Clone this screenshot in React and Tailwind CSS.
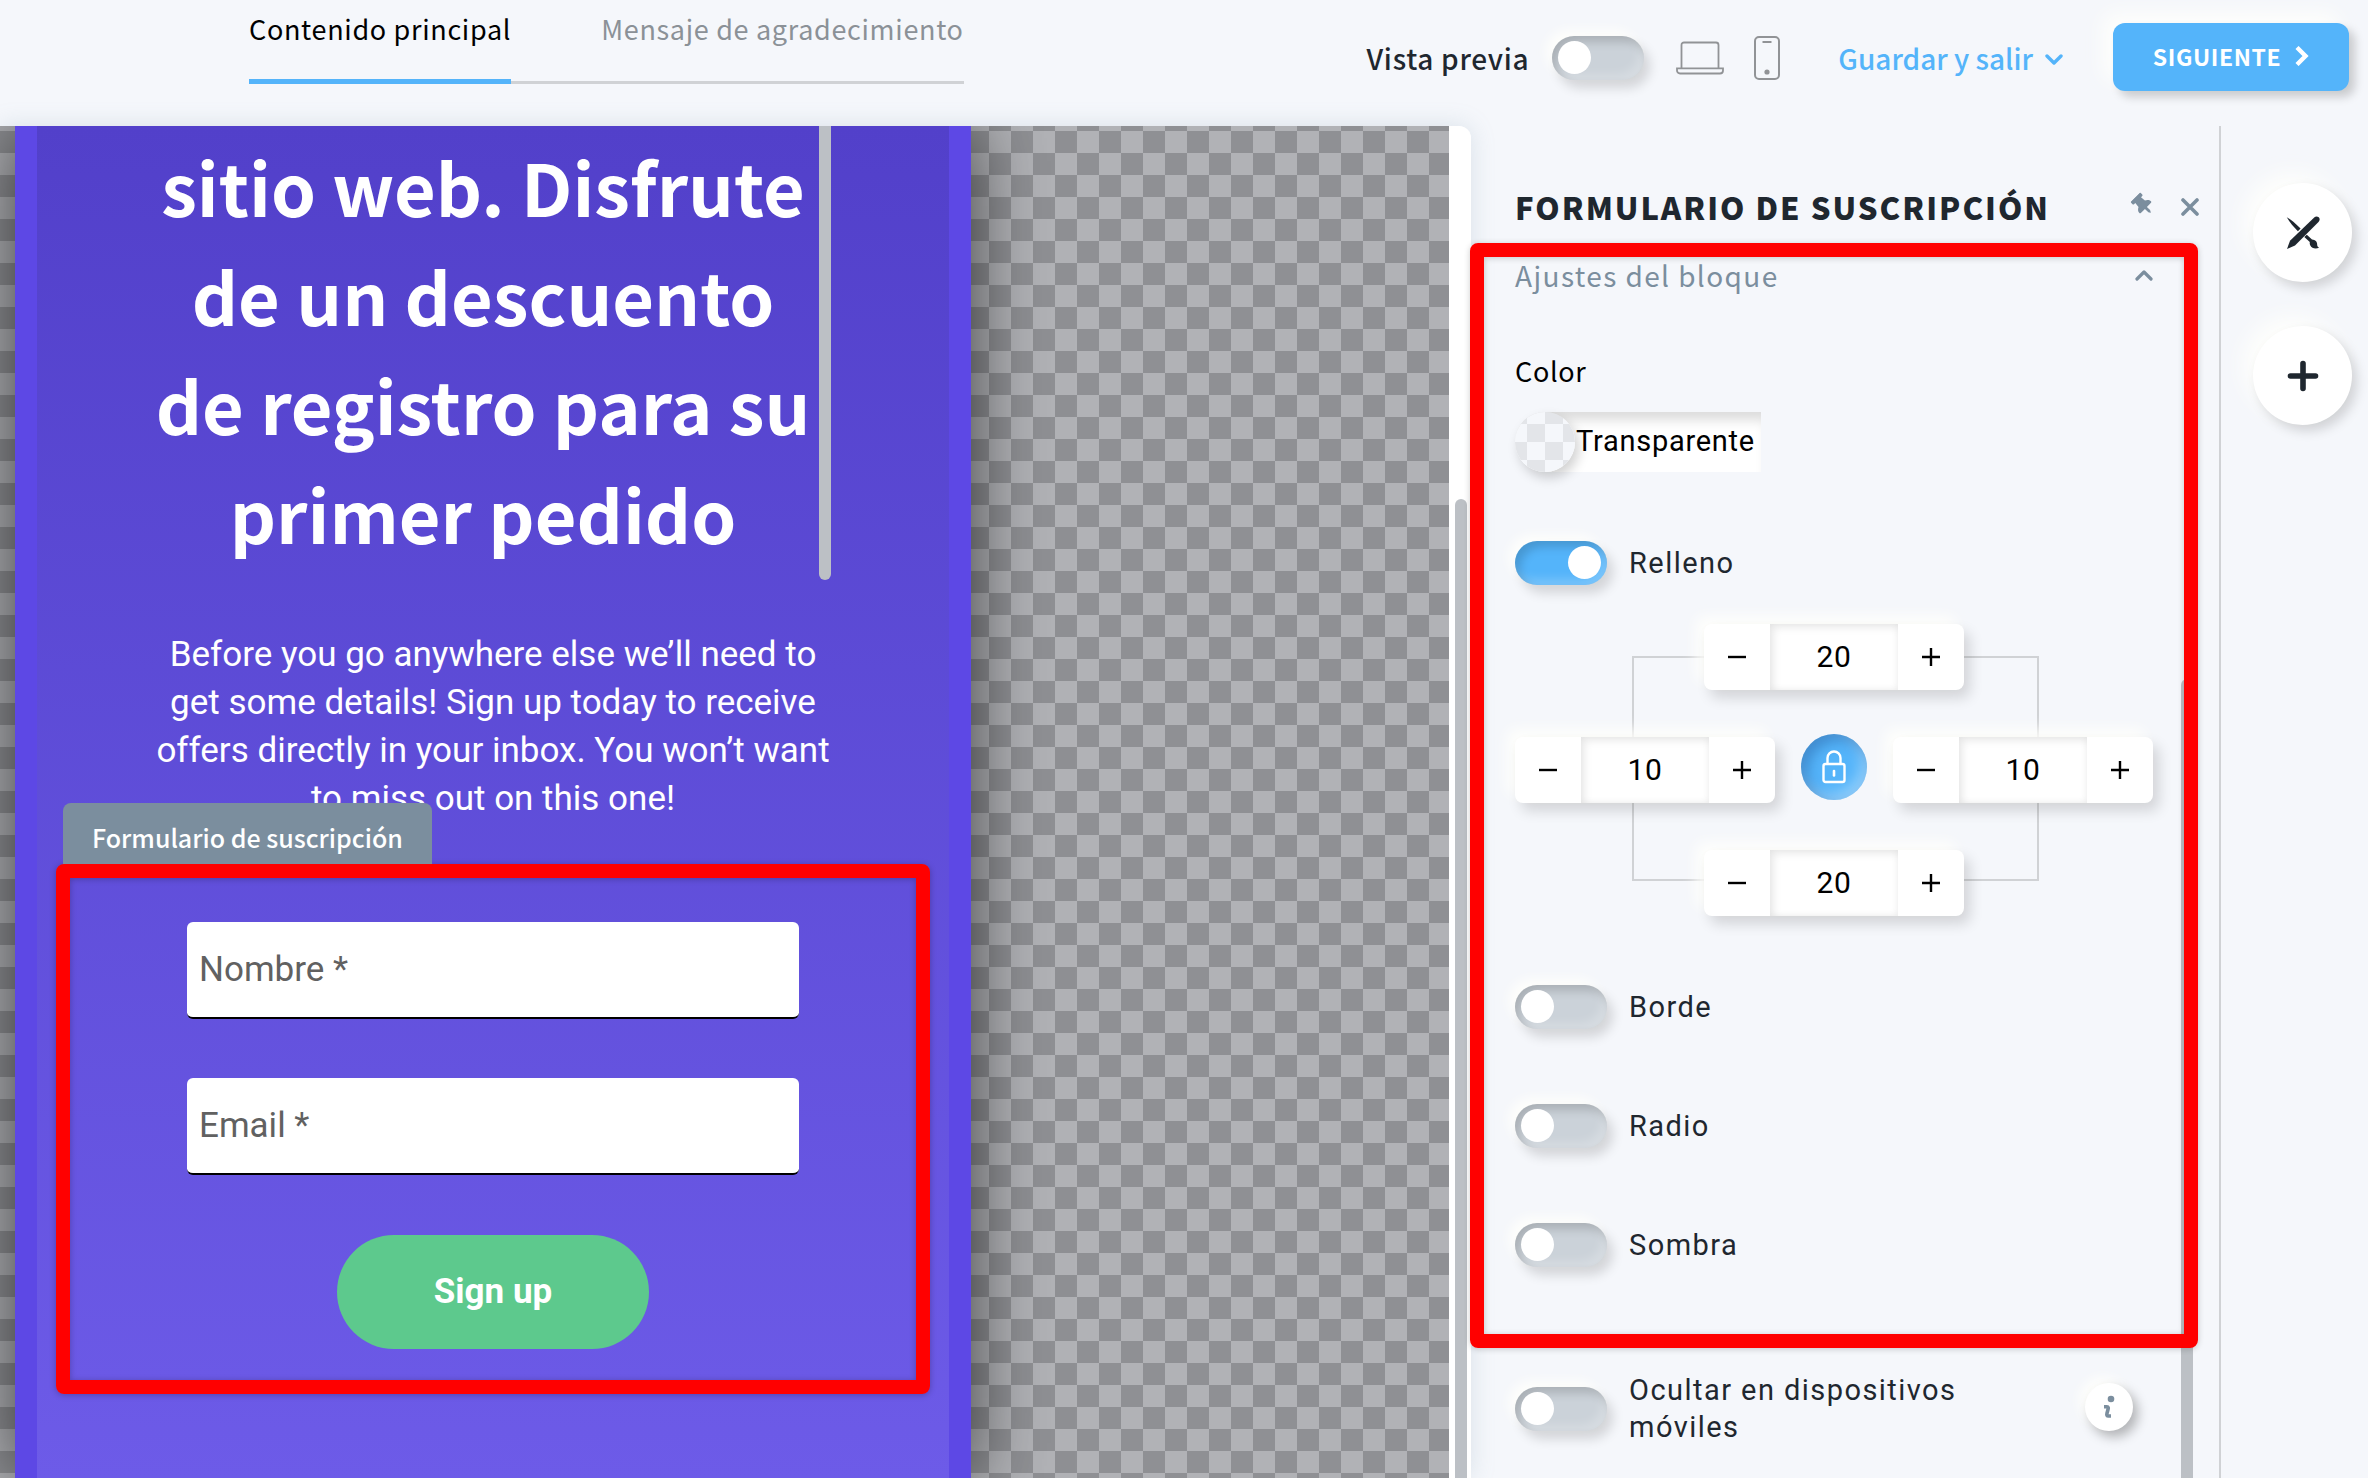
import React from "react";
import { FaThumbtack } from "react-icons/fa";

const SANS = "font-['Noto_Sans_CJK_SC','Noto_Sans',sans-serif]";
const RAISED = "shadow-[6px_8px_14px_rgba(0,0,0,0.14),-8px_-8px_14px_rgba(255,255,252,0.9)]";

function Switch({ id, checked = false }) {
  return (
    <input
      id={id}
      type="checkbox"
      role="switch"
      defaultChecked={checked}
      className="relative h-11 w-[92px] shrink-0 cursor-pointer appearance-none rounded-full bg-[#cbd2d9] shadow-[6px_8px_12px_rgba(0,0,0,0.14),-6px_-6px_12px_rgba(255,255,252,0.9),inset_5px_6px_10px_rgba(0,0,0,0.16),inset_-5px_-6px_10px_rgba(255,255,255,0.22)] before:absolute before:top-[5px] before:left-[6px] before:size-[33px] before:rounded-full before:bg-white checked:bg-[#54b4fa] checked:before:left-[53px]"
    />
  );
}

function SwitchRow({ id, label, checked, className = "" }) {
  return (
    <div className={`flex items-center gap-[22px] ${className}`}>
      <Switch id={id} checked={checked} />
      <label htmlFor={id} className="text-[29px] leading-[37px] tracking-wider text-[#1f272f]">
        {label}
      </label>
    </div>
  );
}

function Stepper({ label, value }) {
  return (
    <div role="group" aria-label={label} className={`relative flex h-[66px] w-[260px] rounded-lg bg-white ${RAISED}`}>
      <button type="button" aria-label={`Reducir ${label}`} className="flex w-[66px] items-center justify-center rounded-l-lg">
        <svg className="size-[18px]" viewBox="0 0 18 18" stroke="#000" strokeWidth="2.4"><path d="M0 9h18" /></svg>
      </button>
      <input
        type="text"
        aria-label={label}
        defaultValue={value}
        className="w-32 bg-white pb-0.5 text-center text-[30px] tracking-wide text-black shadow-[inset_3px_3px_8px_rgba(0,0,0,0.1),inset_-2px_-2px_6px_rgba(0,0,0,0.03)] outline-none"
      />
      <button type="button" aria-label={`Aumentar ${label}`} className="flex w-[66px] items-center justify-center rounded-r-lg">
        <svg className="size-[18px]" viewBox="0 0 18 18" stroke="#000" strokeWidth="2.4"><path d="M0 9h18M9 0v18" /></svg>
      </button>
    </div>
  );
}

function Header() {
  return (
    <header className={`flex h-[126px] shrink-0 justify-between pr-[19px] pl-[249px] ${SANS}`}>
      <nav className="flex h-[84px] gap-[90px] shadow-[inset_0_-3px_0_#d0d2d5]">
        <button type="button" className="border-b-[5px] border-[#54b4fa] pb-[22px] text-[27px] leading-[36px] tracking-wide text-black">
          Contenido principal
        </button>
        <button type="button" className="border-b-[5px] border-transparent pb-[22px] text-[27px] leading-[36px] tracking-wide text-[#8b9197]">
          Mensaje de agradecimiento
        </button>
      </nav>
      <div className="flex h-[116px] items-center">
        <label htmlFor="preview" className="mr-[23px] text-[28px] font-medium tracking-wide text-[#1f272f]">Vista previa</label>
        <Switch id="preview" />
        <button type="button" aria-label="Escritorio" className="ml-8">
          <svg width="48" height="34" viewBox="0 0 48 34" fill="none" stroke="#919396" strokeWidth="1.8">
            <path d="M5.5 27V4a2.5 2.5 0 0 1 2.5-2.5h32A2.5 2.5 0 0 1 42.500 4v23" />
            <path d="M1 27.300h46v2.200a3 3 0 0 1-3 3H4a3 3 0 0 1-3-3z" />
          </svg>
        </button>
        <button type="button" aria-label="Móvil" className="ml-[30px]">
          <svg width="26" height="44" viewBox="0 0 26 44" fill="none" stroke="#919396" strokeWidth="2">
            <rect x="1" y="1" width="24" height="42" rx="4" />
            <path d="M8.500 6h9" />
            <circle cx="13" cy="36" r="2.600" fill="#919396" stroke="none" />
          </svg>
        </button>
        <button type="button" className="ml-[58px] flex items-center gap-3 text-[28px] font-medium text-[#54b4fa]">
          Guardar y salir
          <svg className="mt-1" width="18" height="12" viewBox="0 0 18 12" fill="none" stroke="currentColor" strokeWidth="3.400" strokeLinecap="round" strokeLinejoin="round"><path d="M2 2l7 7 7-7" /></svg>
        </button>
        <button type="button" className="-mt-0.5 ml-[50px] flex h-[68px] w-[236px] items-center justify-center gap-[14px] rounded-xl bg-[#54b4fa] pb-0.5 text-[23px] font-bold tracking-wide text-white shadow-[6px_6px_10px_rgba(0,0,0,0.18),-10px_-10px_20px_rgba(255,255,252,0.9)]">
          SIGUIENTE
          <svg width="14" height="20" viewBox="0 0 14 20" fill="none" stroke="currentColor" strokeWidth="4.400"><path d="M2 1.500l8.500 8.500L2 18.500" /></svg>
        </button>
      </div>
    </header>
  );
}

function Field({ id, label, type }) {
  return (
    <input
      id={id}
      type={type}
      aria-label={label}
      placeholder={label}
      className="h-[97px] w-full rounded-md border-b-2 border-black bg-white px-3 text-[35px] text-black outline-none placeholder:text-[#616161] placeholder:opacity-100"
    />
  );
}

function Popup() {
  return (
    <div className="h-full w-[956px] border-x-[22px] border-[#5d48e5] bg-linear-to-b from-[#5240ca] to-[#6d5be8] bg-origin-border shadow-[0_0_70px_rgba(0,0,0,0.65)]">
      <div className="mx-auto flex h-[454px] w-[692px]">
        <h1 className={`flex-1 pt-[5px] text-center text-[72px] leading-[109px] font-bold text-white ${SANS}`}>
          sitio web. Disfrute
          <br />
          de un descuento
          <br />
          de registro para su
          <br />
          primer pedido
        </h1>
        <div className="mr-2 w-3 rounded-b-full bg-[#bcc0c5]" />
      </div>
      <p className="mt-[51px] text-center text-[35px] leading-[48px] text-white">
        Before you go anywhere else we’ll need to
        <br />
        get some details! Sign up today to receive
        <br />
        offers directly in your inbox. You won’t want
        <br />
        to miss out on this one!
      </p>
      <section className="relative mx-[19px] mt-[41px]">
        <div className={`absolute bottom-full left-[7px] flex h-[61px] items-center rounded-t-lg bg-[#7b8e9e] px-[29px] pt-3 text-[25px] leading-[30px] font-medium text-white ${SANS}`}>
          <span className="pb-1.5">Formulario de suscripción</span>
        </div>
        <form className="flex flex-col items-center rounded-lg border-[14px] border-[#ff0000] px-[117px] pt-11 pb-[31px] shadow-[0_1px_6px_rgba(0,0,0,0.25),inset_0_1px_6px_rgba(0,0,0,0.25)]" onSubmit={(e) => e.preventDefault()}>
          <Field id="name" type="text" label="Nombre *" />
          <div className="h-[59px]" />
          <Field id="email" type="email" label="Email *" />
          <button type="submit" className="mt-[60px] h-[114px] w-[312px] rounded-full bg-[#5dc98d] text-[35px] font-bold text-white">
            Sign up
          </button>
        </form>
      </section>
    </div>
  );
}

function Padding() {
  return (
    <div className="relative mt-[39px] flex flex-col items-center">
      <div className="absolute top-8 right-[114px] bottom-[35px] left-[117px] border-2 border-[#d0d2d5]" />
      <Stepper label="Relleno superior" value="20" />
      <div className="relative my-[47px] flex h-[66px] w-full items-center justify-between">
        <Stepper label="Relleno izquierdo" value="10" />
        <button type="button" aria-label="Bloquear proporciones" className="-mt-1.5 flex size-[66px] items-center justify-center rounded-full bg-[#54b4fa] shadow-[inset_6px_6px_14px_rgba(0,30,90,0.28),inset_-6px_-6px_14px_rgba(255,255,255,0.35)]">
          <svg width="24" height="34" viewBox="0 0 24 34" fill="none" stroke="#fff" strokeWidth="2.400">
            <rect x="1.500" y="14" width="21" height="18" rx="2" />
            <path d="M5.500 14V8a6.500 6.500 0 0 1 13 0v6" />
            <path d="M12 21v4.500" strokeWidth="2.600" strokeLinecap="round" />
          </svg>
        </button>
        <Stepper label="Relleno derecho" value="10" />
      </div>
      <Stepper label="Relleno inferior" value="20" />
    </div>
  );
}

function SettingsPanel() {
  return (
    <aside className="relative w-[748px] shrink-0">
      <div className="absolute top-[553px] right-[26px] bottom-0 w-3 rounded-t-full bg-[#bcc0c5]" />
      <div className={`flex h-[117px] items-center pt-11 pr-5 pl-11 ${SANS}`}>
        <h2 className="flex-1 text-[31px] leading-[44px] font-black tracking-[2px] text-[#1f272f]">FORMULARIO DE SUSCRIPCIÓN</h2>
        <button type="button" aria-label="Fijar panel" className="mr-[27px] pb-1 text-[#7b8e9e]">
          <FaThumbtack className="size-[22px] -rotate-45" />
        </button>
        <button type="button" aria-label="Cerrar" className="text-[#7b8e9e]">
          <svg width="18" height="18" viewBox="0 0 18 18" stroke="currentColor" strokeWidth="3.600" strokeLinecap="round"><path d="M2 2l14 14M16 2L2 16" /></svg>
        </button>
      </div>
      <section className="relative mr-[21px] -ml-px rounded-lg border-[14px] border-[#ff0000] px-[31px] pb-[67px] shadow-[0_1px_6px_rgba(0,0,0,0.2),inset_0_1px_6px_rgba(0,0,0,0.2)]">
        <button type="button" aria-expanded="true" className={`flex h-9 w-full items-center justify-between text-[28px] tracking-wider text-[#7b8e9e] ${SANS}`}>
          Ajustes del bloque
          <svg width="18" height="11" viewBox="0 0 18 11" fill="none" stroke="currentColor" strokeWidth="3.200" strokeLinecap="round" strokeLinejoin="round"><path d="M2 9l7-7 7 7" /></svg>
        </button>
        <p className={`mt-[60px] h-9 text-[27px] leading-[36px] tracking-wide text-black ${SANS}`}>Color</p>
        <button type="button" className="mt-[23px] flex h-[60px] w-[246px] items-center rounded-l-full rounded-r-lg bg-white text-[29px] tracking-wide text-black shadow-[inset_0_14px_12px_-6px_rgba(0,0,0,0.14)]">
          <span className="size-[60px] shrink-0 rounded-full bg-[repeating-conic-gradient(#f5f7fb_0_25%,#e3e5e9_0_50%)] bg-[length:36px_36px] bg-[position:30px_30px] shadow-[4px_6px_12px_rgba(0,0,0,0.18)]" />
          <span className="pl-px">Transparente</span>
        </button>
        <SwitchRow id="padding" label="Relleno" checked className="mt-[69px]" />
        <Padding />
        <SwitchRow id="border" label="Borde" className="mt-[69px]" />
        <SwitchRow id="radius" label="Radio" className="mt-[75px]" />
        <SwitchRow id="shadow" label="Sombra" className="mt-[75px]" />
      </section>
      <div className="mt-6 flex items-center pr-[86px] pl-11">
        <SwitchRow id="hide-mobile" label="Ocultar en dispositivos móviles" className="w-[480px]" />
        <button type="button" aria-label="Información" className="mb-1 ml-auto flex size-12 items-center justify-center rounded-full bg-white shadow-[5px_6px_12px_rgba(0,0,0,0.28),-6px_-6px_12px_rgba(255,255,252,0.9)]">
          <svg width="12" height="24" viewBox="0 0 12 24" fill="none">
            <circle cx="8" cy="4" r="3.300" fill="#7b8e9e" />
            <path d="M1 11.800h2.800c1.800 0 1.600 1.400 1.200 2.800l-1 3.600c-.5 2 0 2.800 1.400 2.800h2.600" stroke="#7b8e9e" strokeWidth="3.600" />
          </svg>
        </button>
      </div>
    </aside>
  );
}

function ToolRail() {
  const round = "flex size-[99px] items-center justify-center rounded-full bg-white shadow-[5px_6px_12px_rgba(0,0,0,0.15),-10px_-10px_22px_rgba(255,255,252,0.9)]";
  return (
    <div className="flex w-[149px] shrink-0 flex-col items-end gap-11 border-l-2 border-[#d0d2d5] pt-[57px] pr-4">
      <button type="button" aria-label="Diseño" className={round}>
        <svg width="34" height="34" viewBox="0 0 34 34" fill="#1f272f">
          <path d="M.8 1.200C5 3.200 9.500 7.500 14.600 12.600l-2.700 2.700C8 11 3.600 6.500.8 1.200z" />
          <path d="M20.800 18.700l5.200 4.800c3.300.2 5.300 2.200 5.200 5.400 0 1.400 1 2.400 2 2.600-2.800 1.800-7.500 1.200-9-2.200-.6-1.500-.5-2.300-.4-3.300L18.300 21z" />
          <path d="M28.200 1.400c2-1.800 4.800-.8 5.300 1.200.3 1.300-.1 2.400-1 3.400L9 29.500 1 33l3-8.200z" />
        </svg>
      </button>
      <button type="button" aria-label="Añadir" className={round}>
        <svg width="32" height="32" viewBox="0 0 32 32" stroke="#1f272f" strokeWidth="5.600" strokeLinecap="round"><path d="M16 3.500v25M3.500 16h25" /></svg>
      </button>
    </div>
  );
}

export default function App() {
  return (
    <div className="flex h-screen flex-col overflow-hidden bg-[#f5f7fb] font-['Roboto','Noto_Sans',sans-serif]">
      <Header />
      <div className="flex min-h-0 flex-1">
        <div className="flex min-w-0 flex-1 rounded-tr-xl shadow-[0_0_24px_rgba(120,150,170,0.22)]">
          <main className="min-w-0 flex-1 overflow-hidden bg-[repeating-conic-gradient(#b1b2b6_0_25%,#8f9094_0_50%)] bg-[length:44px_44px] bg-[position:43px_5px] pl-[15px]">
            <Popup />
          </main>
          <div className="w-[22px] rounded-tr-xl bg-white px-1.5 pt-[373px]">
            <div className="h-full w-3 rounded-t-full bg-[#bcc0c5]" />
          </div>
        </div>
        <SettingsPanel />
        <ToolRail />
      </div>
    </div>
  );
}
